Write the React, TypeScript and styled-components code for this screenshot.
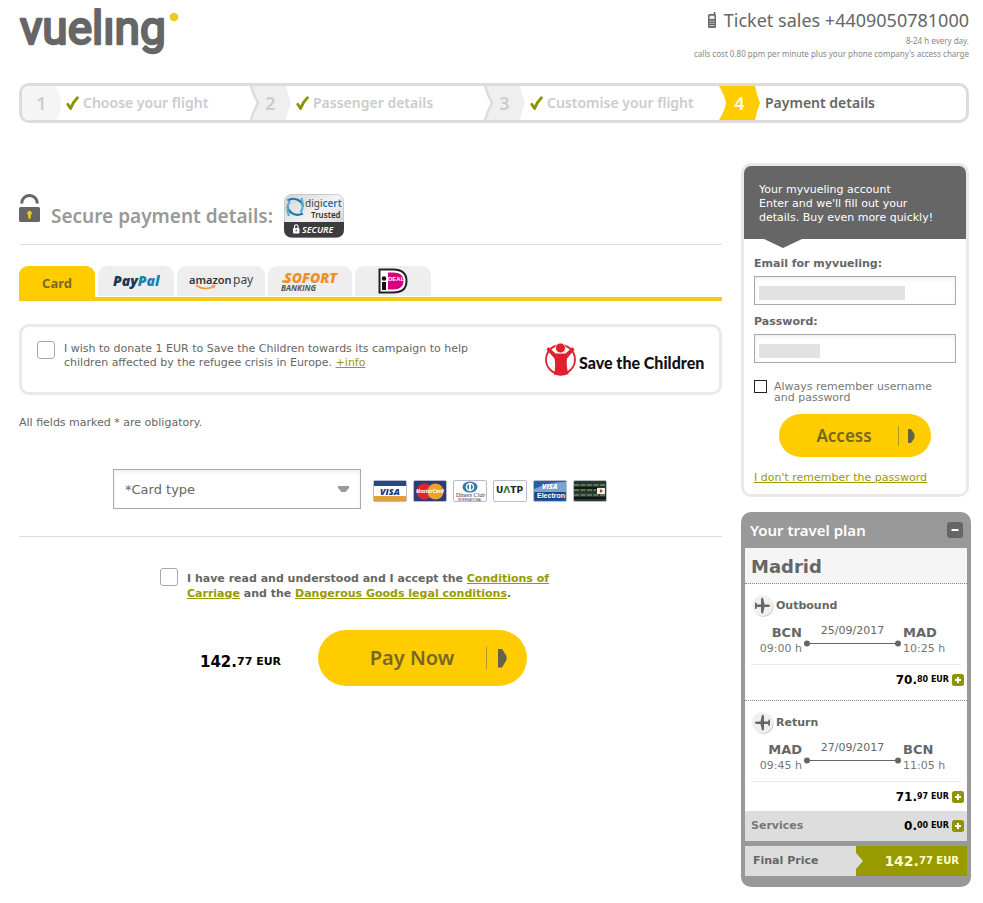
import React from "react";
import styled, { createGlobalStyle } from "styled-components";

const ui = `"DejaVu Sans", Verdana, sans-serif`;
const display = `"Noto Sans", "Open Sans", sans-serif`;
const yellow = "#ffcc00";
const olive = "#999900";
const dark = "#666666";

const GlobalStyle = createGlobalStyle`
  *, *::before, *::after { box-sizing: border-box; }
  body { margin: 0; background: #fff; color: ${dark}; font: 11px/14px ${ui}; }
  button, input, select { font: inherit; color: inherit; margin: 0; }
  h1, h2, h3, p, ol, ul { margin: 0; padding: 0; }
  ol, ul { list-style: none; }
  svg { display: block; flex: none; }
`;

const Page = styled.div`
  padding: 0 14px 16px 19px;
`;

/* ---------- header ---------- */
const Header = styled.header`
  display: flex;
  justify-content: space-between;
  height: 83px;
`;
const HomeLink = styled.a`
  display: block;
`;
const Contact = styled.address`
  display: flex;
  flex-direction: column;
  align-items: flex-end;
  padding-top: 8px;
  font: 8px/13px ${display};
  color: #888;
`;
const Phone = styled.a`
  display: flex;
  align-items: center;
  gap: 7px;
  margin-bottom: 2px;
  font: 18px/24px ${display};
  color: ${dark};
  text-decoration: none;
`;

/* ---------- steps ---------- */
const Steps = styled.ol`
  display: grid;
  grid-template-columns: 228fr 234fr 235fr 247fr;
  height: 40px;
  border: 3px solid #dcdcdc;
  border-radius: 10px;
  overflow: hidden;
`;
const Step = styled.li<{ $active?: boolean }>`
  display: flex;
  align-items: center;
  gap: 5px;
  font: 600 14px/20px ${display};
  color: ${(p) => (p.$active ? dark : "#ccc")};
`;
const StepLabel = styled.span`
  display: flex;
  align-items: center;
  gap: 4px;
`;
const Chip = styled.span<{ $active?: boolean }>`
  display: grid;
  place-items: center;
  font-size: 18px;
  color: ${(p) => (p.$active ? "#fffbe0" : "#ccc")};
  & > * { grid-area: 1 / 1; }
`;

/* ---------- page columns ---------- */
const Columns = styled.div`
  display: grid;
  grid-template-columns: minmax(0, 1fr) 228px;
  gap: 19px;
  align-items: start;
  padding-top: 40px;
`;
const Main = styled.main`
  padding-top: 31px;
`;
const Aside = styled.aside`
  display: flex;
  flex-direction: column;
  gap: 15px;
`;

const TitleRow = styled.div`
  display: flex;
  align-items: flex-start;
  gap: 11px;
  height: 51px;
  border-bottom: 1px solid #ddd;
`;
const Title = styled.h1`
  padding-top: 8px;
  font: 600 19px/28px ${display};
  color: #999;
`;

/* ---------- payment tabs ---------- */
const Tabs = styled.div`
  display: flex;
  gap: 3px;
  margin-top: 21px;
  border-bottom: 4px solid #f5cb16;
`;
const Tab = styled.button<{ $width: number; $active?: boolean }>`
  display: flex;
  align-items: center;
  justify-content: center;
  width: ${(p) => p.$width}px;
  height: 31px;
  padding: ${(p) => (p.$active ? "2px 0 0" : "0")};
  border: 0;
  border-bottom: ${(p) => (p.$active ? "0" : "1px solid #fff")};
  border-radius: 9px 9px 0 0;
  background: ${(p) => (p.$active ? yellow : "#eee")};
  font: bold 13px/18px ${display};
  color: #7a6a20;
`;

/* ---------- donation ---------- */
const Donation = styled.section`
  display: flex;
  align-items: flex-start;
  justify-content: space-between;
  gap: 12px;
  height: 71px;
  margin: 23px 0 21px;
  padding: 14px 14px 0 15px;
  border: 3px solid #e9e9e9;
  border-radius: 10px;
`;
const CheckLabel = styled.label<{ $bold?: boolean }>`
  display: flex;
  align-items: flex-start;
  gap: 9px;
  width: ${(p) => (p.$bold ? 420 : 452)}px;
  line-height: ${(p) => (p.$bold ? 15 : 14)}px;
  font-weight: ${(p) => (p.$bold ? "bold" : "normal")};
`;
const CheckText = styled.span<{ $low?: boolean }>`
  padding-top: ${(p) => (p.$low ? 3 : 1)}px;
`;
const Check = styled.input.attrs({ type: "checkbox" })<{ $small?: boolean }>`
  appearance: none;
  flex: none;
  width: ${(p) => (p.$small ? 13 : 18)}px;
  height: ${(p) => (p.$small ? 13 : 18)}px;
  border: 1px solid ${(p) => (p.$small ? "#222" : "#aaa")};
  border-radius: ${(p) => (p.$small ? 0 : 3)}px;
  background: #fff;
  &:checked { background: ${yellow}; }
`;
const TextLink = styled.a`
  color: ${olive};
`;

/* ---------- card type ---------- */
const CardRow = styled.div`
  display: flex;
  align-items: center;
  gap: 12px;
  margin-top: 39px;
  padding: 0 0 27px 94px;
  border-bottom: 1px solid #ddd;
`;
const SelectBox = styled.div`
  display: grid;
  align-items: center;
  width: 248px;
  & > * { grid-area: 1 / 1; }
  & > svg { justify-self: end; margin-right: 12px; pointer-events: none; }
`;
const Select = styled.select`
  appearance: none;
  width: 100%;
  height: 40px;
  padding: 1px 30px 0 11px;
  border: 1px solid #aaa;
  border-radius: 0;
  background: #fff;
  box-shadow: inset 0 2px 4px #eee;
  font-size: 13px;
`;
const CardLogos = styled.ul`
  display: flex;
  gap: 6px;
  padding-top: 4px;
`;

/* ---------- confirmation ---------- */
const Terms = styled.div`
  padding: 31px 0 0 141px;
`;
const PayRow = styled.div`
  display: flex;
  align-items: center;
  gap: 37px;
  padding: 29px 0 0 181px;
`;
const Price = styled.strong<{ $size: number }>`
  display: inline-flex;
  align-items: flex-start;
  font-size: ${(p) => p.$size}px;
  line-height: 18px;
`;
const Cents = styled.span<{ $size: number }>`
  font-size: ${(p) => p.$size}px;
  line-height: 18px;
  white-space: pre;
`;
const PayPrice = styled.div`
  color: #000;
  padding-top: 8px;
`;
const Pill = styled.button<{ $large?: boolean }>`
  display: flex;
  align-items: center;
  justify-content: flex-end;
  width: ${(p) => (p.$large ? 209 : 152)}px;
  height: ${(p) => (p.$large ? 56 : 43)}px;
  padding: 0 ${(p) => (p.$large ? 19 : 15)}px 0 0;
  border: 0;
  border-radius: 28px;
  background: ${yellow};
  font: 600 ${(p) => (p.$large ? "20px/28px" : "17px/24px")} ${display};
  color: #756723;
`;
const PillText = styled.span<{ $inset: number }>`
  flex: 1;
  padding-left: ${(p) => p.$inset}px;
  text-align: center;
`;

/* ---------- account panel ---------- */
const Account = styled.section`
  height: 334px;
  border: 3px solid #e9e9e9;
  border-radius: 10px;
`;
const AccountIntro = styled.p`
  position: relative;
  height: 73px;
  padding: 17px 15px;
  border-radius: 7px 7px 0 0;
  background: ${dark};
  color: #fff;
  &::after {
    content: "";
    position: absolute;
    top: 100%;
    left: 20px;
    border: solid transparent;
    border-width: 9px 19px 0;
    border-top-color: ${dark};
  }
`;
const AccountForm = styled.form`
  display: flex;
  flex-direction: column;
  padding: 18px 10px 0;
`;
const Field = styled.label`
  display: flex;
  flex-direction: column;
  gap: 5px;
  margin-bottom: 10px;
  font-weight: bold;
`;
const Input = styled.input<{ $fill: number }>`
  width: 100%;
  height: 29px;
  border: 1px solid #aaa;
  background: linear-gradient(#e2e2e2, #e2e2e2) 4px 9px / ${(p) => p.$fill}px 14px no-repeat #fff;
  box-shadow: inset 0 2px 4px #eee;
`;
const Remember = styled.label`
  display: flex;
  gap: 7px;
  margin: 7px 0 11px;
  line-height: 11px;
  color: #777;
`;
const RememberText = styled.span`
  padding-top: 1px;
`;
const AccessWrap = styled.div`
  display: flex;
  justify-content: center;
  margin-bottom: 14px;
`;

/* ---------- travel plan ---------- */
const Plan = styled.section`
  margin-right: -2px;
  padding: 0 4px 11px;
  border-radius: 10px;
  background: #999;
`;
const PlanHead = styled.header`
  display: flex;
  align-items: center;
  justify-content: space-between;
  height: 36px;
  padding: 0 4px 0 5px;
  color: #fff;
`;
const PlanTitle = styled.h2`
  font: 600 15px/22px ${display};
`;
const IconButton = styled.button`
  padding: 0;
  border: 0;
  background: none;
`;
const City = styled.h3`
  height: 36px;
  padding: 0 6px;
  border-bottom: 1px dotted #888;
  background: #f5f5f5;
  font-size: 18px;
  line-height: 37px;
`;
const Leg = styled.section<{ $last?: boolean }>`
  height: ${(p) => (p.$last ? 110 : 117)}px;
  padding: 10px 3px 0 6px;
  background: #fff;
  border-bottom: ${(p) => (p.$last ? "0" : "1px dotted #888")};
`;
const LegTitle = styled.div`
  display: flex;
  align-items: center;
  gap: 2px;
  height: 24px;
  font-weight: bold;
`;
const Route = styled.div`
  display: grid;
  grid-template-columns: 51px 97px 1fr;
  column-gap: 2px;
  height: 47px;
  padding-top: 6px;
  margin-right: 3px;
  border-bottom: 1px solid #e9e9e9;
`;
const Stop = styled.div<{ $right?: boolean }>`
  display: flex;
  flex-direction: column;
  text-align: ${(p) => (p.$right ? "right" : "left")};
  line-height: 15px;
  white-space: nowrap;
  color: #777;
`;
const Code = styled.strong`
  font-size: 13px;
  line-height: 17px;
  color: ${dark};
`;
const Span = styled.div`
  display: flex;
  flex-direction: column;
  align-items: center;
  gap: 2px;
`;
const PriceLine = styled.div`
  display: flex;
  align-items: center;
  justify-content: flex-end;
  gap: 3px;
  height: 30px;
  color: #000;
`;
const Services = styled.div`
  display: flex;
  align-items: center;
  justify-content: space-between;
  height: 30px;
  padding: 0 3px 0 6px;
  margin-bottom: 5px;
  background: #ddd;
  font-weight: bold;
  color: #777;
`;
const Final = styled.div`
  display: grid;
  grid-template-columns: 1fr 1fr;
  height: 30px;
  background: #ddd;
  font-weight: bold;
  line-height: 30px;
`;
const FinalLabel = styled.span`
  padding-left: 8px;
`;
const FinalPrice = styled.div`
  display: flex;
  align-items: center;
  justify-content: space-between;
  padding-right: 8px;
  background: ${olive};
  color: #ffffcc;
`;

/* ---------- drawings ---------- */
const Logo = () => (
  <svg width="170" height="70" viewBox="0 0 170 70" role="img" aria-label="vueling">
    <text x="1" y="44" fontFamily="Roboto, sans-serif" fontWeight="400" fontSize="46" fill={dark} stroke={dark} strokeWidth="2.4" strokeLinejoin="round">vuelıng</text>
    <circle cx="155" cy="17" r="4.3" fill="#edcb1c" />
  </svg>
);

const PhoneIcon = () => (
  <svg width="10" height="16" viewBox="0 0 10 16">
    <path d="M7.5 0v3" stroke={dark} strokeWidth="1.6" />
    <rect x="1" y="2" width="8" height="14" rx="1.5" fill={dark} />
    <rect x="2.5" y="3.7" width="5" height="3.3" fill="#eee" />
    <path d="M2.5 9h5M2.5 11.3h5M2.5 13.6h5" stroke="#eee" strokeWidth="1.1" strokeDasharray="1.2 .7" />
  </svg>
);

const Tick = () => (
  <svg width="13" height="15" viewBox="0 0 13 15">
    <path d="M1.8 8.3 4.6 12.6C6 8.8 8 5 11.4 1.8" fill="none" stroke="#8c9100" strokeWidth="2.8" strokeLinecap="round" strokeLinejoin="round" />
  </svg>
);

const ChipShape = ({ kind }: { kind: "first" | "done" | "active" }) => {
  if (kind === "first")
    return (
      <svg width="39" height="34" viewBox="0 0 39 34">
        <path d="M0 0H34Q39 9 39 17T34 34H0Z" fill="#f5f5f5" />
      </svg>
    );
  const active = kind === "active";
  return (
    <svg width="41" height="34" viewBox="0 0 41 34">
      <path d="M0 0H36Q38 10 41 17Q38 24 36 34H0Q6 24 7 17Q6 10 0 0Z" fill={active ? yellow : "#efefef"} />
      {!active && <path d="M1 0Q4 10 8 17Q4 24 1 34" fill="none" stroke="#dcdcdc" strokeWidth="2.5" />}
    </svg>
  );
};

const Lock = () => (
  <svg width="21" height="29" viewBox="0 0 21 29">
    <path d="M2.8 9.5C2.8-1.2 18.2-1.2 18.2 9.5" fill="none" stroke={dark} strokeWidth="3" />
    <rect x="0" y="13" width="21" height="15" rx="1.5" fill={dark} />
    <path d="M10.5 16.8a2.4 2.4 0 0 1 1.3 4.4v3.2H9.2v-3.2a2.4 2.4 0 0 1 1.3-4.4z" fill="#f6c51b" />
  </svg>
);

const DigicertBadge = () => (
  <svg width="60" height="44" viewBox="0 0 60 44" role="img" aria-label="DigiCert Trusted Secure">
    <defs>
      <linearGradient id="silver" x1="0" y1="0" x2="1" y2="1">
        <stop offset="0" stopColor="#d2d4d6" />
        <stop offset=".5" stopColor="#f4f4f4" />
        <stop offset="1" stopColor="#c4c6c8" />
      </linearGradient>
    </defs>
    <rect x=".5" y=".5" width="59" height="43" rx="7" fill="url(#silver)" stroke="#c9cbcd" />
    <path d="M0 28H60V35Q60 43.500 52 43.500H8Q0 43.500 0 35Z" fill="#3c3c3e" />
    <g fill="none" strokeWidth="2.200">
      <path d="M3.500 6.500Q9 3 15 6.500Q19 9 19 13" stroke="#2079ad" />
      <path d="M17.500 4Q20.500 13 16.500 18.500" stroke="#64acd0" />
      <path d="M19 19.500Q12 22.500 7 18.500Q3.500 16 3.500 12" stroke="#2079ad" />
      <path d="M5 22Q1.500 13 6 7" stroke="#64acd0" />
    </g>
    <text x="21" y="13" fontFamily="Noto Sans" fontSize="10" fill="#444">digi<tspan fill="#1d75ad" fontWeight="600">cert</tspan></text>
    <text x="27" y="24" fontFamily="Noto Sans" fontSize="8" fontWeight="600" fill="#333">Trusted</text>
    <rect x="9" y="34" width="6.500" height="5.500" rx=".8" fill="#fff" />
    <path d="M10.500 34v-1.500a1.700 1.700 0 0 1 3.500 0V34" fill="none" stroke="#fff" strokeWidth="1.200" />
    <path d="M12.200 35.500v2" stroke="#3c3c3e" />
    <text x="18" y="39" fontFamily="Noto Sans" fontStyle="italic" fontSize="9" fontWeight="600" fill="#fff">SECURE</text>
  </svg>
);

const PayPal = () => (
  <svg width="48" height="20" viewBox="0 0 48 20" role="img" aria-label="PayPal">
    <text x="1" y="15" fontFamily="Open Sans" fontStyle="italic" fontWeight="800" fontSize="14" fill="#17375e">Pay<tspan fill="#1c7fae">Pal</tspan></text>
  </svg>
);
const AmazonPay = () => (
  <svg width="66" height="22" viewBox="0 0 66 22" role="img" aria-label="amazon pay">
    <text x="1" y="14" fontFamily="Noto Sans" fontSize="11" fontWeight="600" fill="#333">amazon</text>
    <text x="45" y="14" fontFamily="Noto Sans" fontSize="12" fontWeight="400" fill="#444">pay</text>
    <path d="M8 15.500Q17 21 26 16.500" fill="none" stroke="#f29a2e" strokeWidth="1.500" />
    <path d="M23.500 15.500l3.800-.3-1.600 3.300" fill="none" stroke="#f29a2e" />
  </svg>
);
const Sofort = () => (
  <svg width="60" height="22" viewBox="0 0 60 22" role="img" aria-label="SOFORT Banking">
    <path d="M2 11.500H9" stroke="#ee8f2b" strokeWidth="2" />
    <text x="4" y="13" fontFamily="Open Sans" fontStyle="italic" fontWeight="800" fontSize="14" fill="#ee8f2b">SOFORT</text>
    <text x="1" y="21" fontFamily="Open Sans" fontStyle="italic" fontWeight="700" fontSize="8" fill="#555">BANKING</text>
  </svg>
);
const Ideal = () => (
  <svg width="30" height="26" viewBox="0 0 30 26" role="img" aria-label="iDEAL">
    <path d="M1.500 1.500H15C24 1.500 28.500 6 28.500 13S24 24.500 15 24.500H1.500Z" fill="#fff" stroke="#222" strokeWidth="2" />
    <path d="M10 4.500H15C22 4.500 25.500 7.500 25.500 13S22 21.500 15 21.500H10Z" fill="#d5007f" />
    <circle cx="6" cy="10.500" r="2.200" fill="#111" />
    <rect x="4" y="14" width="4" height="8" fill="#111" />
    <text x="10" y="13" fontFamily="Liberation Sans" fontWeight="bold" fontSize="6" fill="#fff">DEAL</text>
  </svg>
);

const SaveTheChildren = () => (
  <svg width="160" height="36" viewBox="0 0 160 36" role="img" aria-label="Save the Children">
    <circle cx="15.500" cy="18.500" r="14.500" fill="none" stroke="#d9232f" strokeWidth="1.800" />
    <path d="M1.500 8.500 3.500 6 10.500 12.500H20.500L27.500 6 29.500 8.500 22 17.500Q21 25 23.500 33Q16 36 9 33.500Q11 25 9.500 17.500Z" fill="#e31e2d" />
    <circle cx="15.500" cy="7" r="5" fill="#e31e2d" stroke="#fff" strokeWidth=".8" />
    <text x="34" y="28" fontFamily="Lato, sans-serif" fontWeight="900" fontSize="16" fill="#111">Save the Children</text>
  </svg>
);

const frame = (fill: string) => <rect x=".5" y=".5" width="33" height="21" rx="1.500" fill={fill} stroke="#bbc" />;
const Visa = () => (
  <svg width="34" height="22" viewBox="0 0 34 22" role="img" aria-label="Visa">
    {frame("#fff")}
    <path d="M1 1H33V6H1Z" fill="#26478b" />
    <path d="M1 16H33V21H1Z" fill="#dda23a" />
    <text x="7" y="15" fontFamily="Open Sans" fontStyle="italic" fontWeight="800" fontSize="9" fill="#1d3477">VISA</text>
  </svg>
);
const MasterCard = () => (
  <svg width="34" height="22" viewBox="0 0 34 22" role="img" aria-label="MasterCard">
    {frame("#2d3c78")}
    <circle cx="11.500" cy="11.500" r="8" fill="#d92a2e" />
    <circle cx="22.500" cy="11.500" r="8" fill="#eba32b" />
    <text x="3" y="13" fontFamily="Open Sans" fontStyle="italic" fontWeight="700" fontSize="5" fill="#fff">MasterCard</text>
  </svg>
);
const Diners = () => (
  <svg width="34" height="22" viewBox="0 0 34 22" role="img" aria-label="Diners Club International">
    {frame("#fff")}
    <ellipse cx="17" cy="7" rx="7.500" ry="5.500" fill="#2e7ba4" />
    <circle cx="17" cy="7" r="4.300" fill="#fff" />
    <path d="M16 4.200a3 3 0 0 0 0 5.600zM18 4.200a3 3 0 0 1 0 5.600z" fill="#2e7ba4" />
    <text x="3" y="17" fontFamily="Liberation Serif" fontSize="6" fill="#334">Diners Club</text>
    <text x="5" y="21" fontFamily="Liberation Sans" fontSize="3" fill="#334">INTERNATIONAL</text>
  </svg>
);
const Uatp = () => (
  <svg width="34" height="22" viewBox="0 0 34 22" role="img" aria-label="UATP">
    {frame("#fff")}
    <text x="3" y="13" fontFamily="DejaVu Sans" fontWeight="bold" fontSize="9" fill="#222">U<tspan fill="#397b2c">Λ</tspan>TP</text>
  </svg>
);
const Electron = () => (
  <svg width="34" height="22" viewBox="0 0 34 22" role="img" aria-label="Visa Electron">
    {frame("#2b5e9e")}
    <path d="M1 9Q18 1 33 2V12H1Z" fill="#7aa5d0" />
    <text x="9" y="9" fontFamily="Open Sans" fontStyle="italic" fontWeight="800" fontSize="7" fill="#fff">VISA</text>
    <path d="M2 12H32V20H2Z" fill="#1e4684" />
    <text x="4" y="18" fontFamily="Liberation Sans" fontWeight="bold" fontSize="7" fill="#fff">Electron</text>
  </svg>
);
const Airplus = () => (
  <svg width="34" height="22" viewBox="0 0 34 22" role="img" aria-label="AirPlus">
    {frame("#263a2e")}
    <path d="M1 5H33M1 10H23M1 15H33" stroke="#6f8a6b" strokeWidth="1.500" strokeDasharray="5 1.500" />
    <path d="M1 8H24M1 18H33" stroke="#101a14" strokeWidth="2" />
    <rect x="24" y="8" width="8" height="6" fill="#eee" />
    <path d="M27 9l3 2-3 2z" fill="#c8362c" />
  </svg>
);

const PillArrow = ({ large }: { large?: boolean }) => (
  <svg width={large ? 22 : 18} height={large ? 22 : 20} viewBox={large ? "0 0 22 22" : "0 0 18 20"}>
    <path d={large ? "M.5 0V22" : "M.5 0V20"} stroke="#b39a2a" />
    <path d={large ? "M12 2H16L20.500 9V13L16 20.500H12Z" : "M10 3H13L16.500 8V12L13 17H10Z"} fill="#66624a" />
  </svg>
);

const Plane = ({ back }: { back?: boolean }) => (
  <svg width="23" height="24" viewBox="0 0 23 24">
    <circle cx="12.500" cy="12.800" r="10.200" fill="#d0d0d0" />
    <circle cx="11.500" cy="11.500" r="10.500" fill="#f0f0f0" />
    <path
      transform={back ? "matrix(-1 0 0 1 23 0)" : undefined}
      d="M4 8.500H5.200L6 10.500H10V5L11 3.800H12L13.500 10.500H17Q19.300 10.800 19.300 11.800T17 13H13.500L12 19.500H11L10 18.300V13H6L5.200 15H4Z"
      fill={dark}
    />
  </svg>
);

const RouteLine = () => (
  <svg width="97" height="7" viewBox="0 0 97 7">
    <path d="M3 3.500H94" stroke={dark} />
    <circle cx="3" cy="3.500" r="3" fill={dark} />
    <circle cx="94" cy="3.500" r="3" fill={dark} />
  </svg>
);

const Plus = () => (
  <svg width="12" height="12" viewBox="0 0 12 12">
    <rect width="12" height="12" rx="2.500" fill="#8f9500" />
    <path d="M6 3V9M3 6H9" stroke="#fff" strokeWidth="2" />
  </svg>
);

const Minus = () => (
  <svg width="16" height="16" viewBox="0 0 16 16">
    <rect width="16" height="16" rx="3" fill={dark} />
    <path d="M4.500 8H11.500" stroke="#fff" strokeWidth="2" />
  </svg>
);

/* ---------- parts ---------- */
const Amount = ({ whole, cents, size = 12, small = 8 }: { whole: string; cents: string; size?: number; small?: number }) => (
  <Price $size={size}>
    {whole}.<Cents $size={small}>{cents} EUR</Cents>
  </Price>
);

type LegProps = { title: string; from: string; dep: string; date: string; to: string; arr: string; whole: string; cents: string; back?: boolean };
const FlightLeg = ({ title, from, dep, date, to, arr, whole, cents, back }: LegProps) => (
  <Leg $last={back}>
    <LegTitle><Plane back={back} />{title}</LegTitle>
    <Route>
      <Stop $right><Code>{from}</Code>{dep} h</Stop>
      <Span><time>{date}</time><RouteLine /></Span>
      <Stop><Code>{to}</Code>{arr} h</Stop>
    </Route>
    <PriceLine>
      <Amount whole={whole} cents={cents} />
      <IconButton aria-label={`${title} price details`}><Plus /></IconButton>
    </PriceLine>
  </Leg>
);

const steps = ["Choose your flight", "Passenger details", "Customise your flight", "Payment details"];
const cards = [Visa, MasterCard, Diners, Uatp, Electron, Airplus];

export default function App() {
  return (
    <>
      <GlobalStyle />
      <Page>
        <Header>
          <HomeLink href="#"><Logo /></HomeLink>
          <Contact>
            <Phone href="tel:+4409050781000"><PhoneIcon />Ticket sales +4409050781000</Phone>
            <span>8-24 h every day.</span>
            <span>calls cost 0.80 ppm per minute plus your phone company's access charge</span>
          </Contact>
        </Header>

        <Steps>
          {steps.map((label, i) => {
            const active = i === 3;
            return (
              <Step key={label} $active={active} aria-current={active ? "step" : undefined}>
                <Chip $active={active}>
                  <ChipShape kind={active ? "active" : i === 0 ? "first" : "done"} />
                  <span>{i + 1}</span>
                </Chip>
                <StepLabel>{!active && <Tick />}{label}</StepLabel>
              </Step>
            );
          })}
        </Steps>

        <Columns>
          <Main>
            <TitleRow>
              <Lock />
              <Title>Secure payment details:</Title>
              <DigicertBadge />
            </TitleRow>

            <Tabs role="tablist">
              <Tab role="tab" aria-selected $width={76} $active>Card</Tab>
              <Tab role="tab" $width={76}><PayPal /></Tab>
              <Tab role="tab" $width={88}><AmazonPay /></Tab>
              <Tab role="tab" $width={84}><Sofort /></Tab>
              <Tab role="tab" $width={76}><Ideal /></Tab>
            </Tabs>

            <Donation>
              <CheckLabel>
                <Check />
                <CheckText>
                  I wish to donate 1 EUR to Save the Children towards its campaign to help children affected by the refugee crisis in Europe. <TextLink href="#info">+info</TextLink>
                </CheckText>
              </CheckLabel>
              <SaveTheChildren />
            </Donation>

            <p>All fields marked * are obligatory.</p>

            <CardRow>
              <SelectBox>
                <Select aria-label="Card type" defaultValue="">
                  <option value="">*Card type</option>
                  <option>Visa</option>
                  <option>MasterCard</option>
                </Select>
                <svg width="11" height="7" viewBox="0 0 11 7"><path d="M0 0H11V2L7.500 6H3.500L0 2Z" fill="#999" /></svg>
              </SelectBox>
              <CardLogos>
                {cards.map((Card, i) => <li key={i}><Card /></li>)}
              </CardLogos>
            </CardRow>

            <Terms>
              <CheckLabel $bold>
                <Check />
                <CheckText $low>
                  I have read and understood and I accept the <TextLink href="#carriage">Conditions of Carriage</TextLink> and the <TextLink href="#goods">Dangerous Goods legal conditions</TextLink>.
                </CheckText>
              </CheckLabel>
            </Terms>

            <PayRow>
              <PayPrice><Amount whole="142" cents="77" size={15} small={11} /></PayPrice>
              <Pill $large><PillText $inset={20}>Pay Now</PillText><PillArrow large /></Pill>
            </PayRow>
          </Main>

          <Aside>
            <Account>
              <AccountIntro>
                Your myvueling account<br />Enter and we'll fill out your<br />details. Buy even more quickly!
              </AccountIntro>
              <AccountForm onSubmit={(e) => e.preventDefault()}>
                <Field>Email for myvueling:<Input type="email" $fill={146} /></Field>
                <Field>Password:<Input type="password" $fill={61} /></Field>
                <Remember><Check $small /><RememberText>Always remember username and password</RememberText></Remember>
                <AccessWrap><Pill><PillText $inset={11}>Access</PillText><PillArrow /></Pill></AccessWrap>
                <TextLink href="#password">I don't remember the password</TextLink>
              </AccountForm>
            </Account>

            <Plan>
              <PlanHead>
                <PlanTitle>Your travel plan</PlanTitle>
                <IconButton aria-label="Collapse"><Minus /></IconButton>
              </PlanHead>
              <City>Madrid</City>
              <FlightLeg title="Outbound" from="BCN" dep="09:00" date="25/09/2017" to="MAD" arr="10:25" whole="70" cents="80" />
              <FlightLeg back title="Return" from="MAD" dep="09:45" date="27/09/2017" to="BCN" arr="11:05" whole="71" cents="97" />
              <Services>
                Services
                <PriceLine>
                  <Amount whole="0" cents="00" />
                  <IconButton aria-label="Services price details"><Plus /></IconButton>
                </PriceLine>
              </Services>
              <Final>
                <FinalLabel>Final Price</FinalLabel>
                <FinalPrice>
                  <svg width="7" height="16" viewBox="0 0 7 16"><path d="M0 0 7 8 0 16Z" fill="#ddd" /></svg>
                  <Amount whole="142" cents="77" size={14} small={10} />
                </FinalPrice>
              </Final>
            </Plan>
          </Aside>
        </Columns>
      </Page>
    </>
  );
}
